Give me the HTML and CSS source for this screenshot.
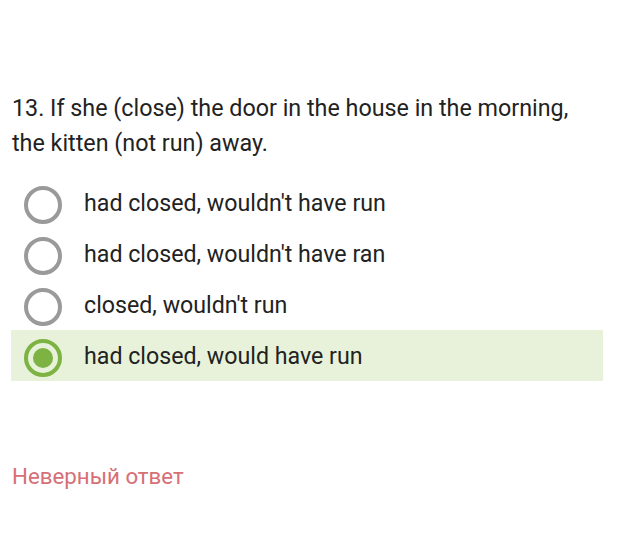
FILE: index.html
```html
<!DOCTYPE html>
<html>
<head>
<meta charset="utf-8">
<link rel="stylesheet" href="styles.css">
</head>
<body>
<div class="quiz">
  <p class="question">13. If she (close) the door in the house in the morning, the kitten (not run) away.</p>
  <div class="options">
    <div class="option"><span class="radio"></span><span class="label">had closed, wouldn't have run</span></div>
    <div class="option"><span class="radio"></span><span class="label">had closed, wouldn't have ran</span></div>
    <div class="option"><span class="radio"></span><span class="label">closed, wouldn't run</span></div>
    <div class="option selected"><span class="radio"></span><span class="label">had closed, would have run</span></div>
  </div>
  <p class="result">Неверный ответ</p>
</div>
</body>
</html>
```
FILE: styles.css
```css
html, body {
  margin: 0;
  padding: 0;
  background: #fff;
}
.quiz {
  font-family: Roboto, "Liberation Sans", sans-serif;
  color: #222;
  padding: 91px 0 0 0;
  width: 625px;
}
.question {
  margin: 0 0 0 12px;
  width: 575px;
  font-size: 23.3px;
  line-height: 35px;
}
.options {
  margin: 16px 0 0 11px;
  width: 592px;
  display: flex;
  flex-direction: column;
}
.option {
  height: 51px;
  display: flex;
  align-items: center;
}
.option.selected {
  background: #e8f2da;
}
.radio {
  box-sizing: border-box;
  width: 38px;
  height: 38px;
  border: 4px solid #9a9a9a;
  border-radius: 50%;
  margin-left: 13px;
  margin-top: 4px;
  flex: none;
  display: flex;
  align-items: center;
  justify-content: center;
}
.selected .radio {
  border-color: #7cb342;
}
.selected .radio::after {
  content: "";
  width: 20px;
  height: 20px;
  border-radius: 50%;
  background: #7cb342;
}
.label {
  margin-left: 22px;
  font-size: 23.2px;
}
.result {
  margin: 82px 0 0 12px;
  font-size: 22.3px;
  color: #d66f76;
}
```
